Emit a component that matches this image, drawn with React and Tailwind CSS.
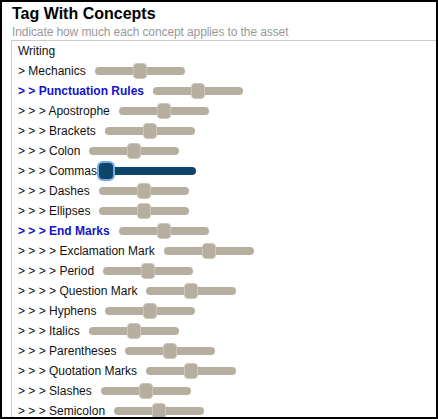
import React from 'react';

const concepts = [
  { depth: 1, name: 'Mechanics' },
  { depth: 2, name: 'Punctuation Rules', group: true },
  { depth: 3, name: 'Apostrophe' },
  { depth: 3, name: 'Brackets' },
  { depth: 3, name: 'Colon' },
  { depth: 3, name: 'Commas', active: true },
  { depth: 3, name: 'Dashes' },
  { depth: 3, name: 'Ellipses' },
  { depth: 3, name: 'End Marks', group: true },
  { depth: 4, name: 'Exclamation Mark' },
  { depth: 4, name: 'Period' },
  { depth: 4, name: 'Question Mark' },
  { depth: 3, name: 'Hyphens' },
  { depth: 3, name: 'Italics' },
  { depth: 3, name: 'Parentheses' },
  { depth: 3, name: 'Quotation Marks' },
  { depth: 3, name: 'Slashes' },
  { depth: 3, name: 'Semicolon' },
];

const Slider = ({ active }) => {
  if (active) {
    return (
      <div className="relative ml-[9px] w-[90px] h-[8px] rounded-full bg-[#0d4569]">
        <div className="absolute left-0 -ml-[7px] top-[-4px] w-[14px] h-[16px] rounded-[4px] bg-[#0d4569] ring-2 ring-[#76a9e6]" />
      </div>
    );
  }
  return (
    <div className="relative ml-[9px] w-[90px] h-[8px] rounded-full bg-[#b6ae9e]">
      <div className="absolute left-1/2 -ml-[7px] top-[-4px] w-[14px] h-[16px] rounded-[4px] bg-[#b6ae9e] border border-[#cdc7ba]" />
    </div>
  );
};

const Row = ({ concept }) => {
  const prefix = '> '.repeat(concept.depth);
  return (
    <div className="flex items-center h-[20px] pl-[6px] whitespace-nowrap">
      <span className={concept.group ? 'font-bold text-[#1414c8]' : 'text-[#111]'}>
        {prefix}
        {concept.name}
      </span>
      <Slider active={concept.active} />
    </div>
  );
};

export default function App() {
  return (
    <div
      className="w-[438px] h-[419px] border-2 border-black bg-white flex flex-col overflow-hidden pl-[9px] pt-[2px]"
      style={{ fontFamily: '"Liberation Sans", Arial, sans-serif' }}
    >
      <h1 className="pl-[1px] text-[16px] leading-[20px] font-bold text-black">Tag With Concepts</h1>
      <p className="pl-[1px] text-[12px] leading-[16px] tracking-[-0.1px] text-[#999]">
        Indicate how much each concept applies to the asset
      </p>
      <div className="flex-1 border-t border-l border-[#ccc] overflow-hidden text-[12px] leading-[20px]">
        <div className="h-[20px] pl-[6px] flex items-center text-[#111]">Writing</div>
        {concepts.map((c) => (
          <Row key={c.name} concept={c} />
        ))}
      </div>
    </div>
  );
}
